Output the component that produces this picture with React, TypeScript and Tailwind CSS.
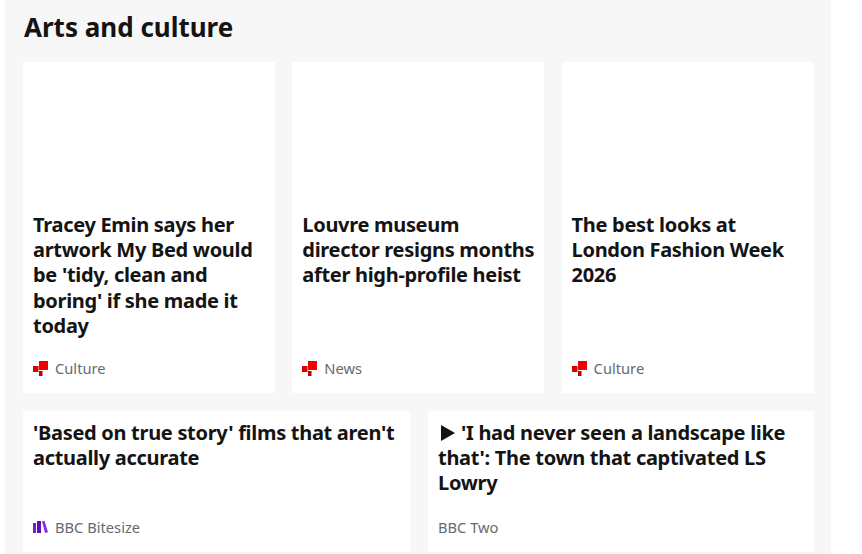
const font = "font-['Noto_Sans','Open_Sans',sans-serif]";

function CultureMark() {
  return (
    <svg width="15" height="15" viewBox="0 0 15 15" className="shrink-0">
      <rect x="0" y="5" width="5.5" height="6" fill="#d80000" />
      <rect x="6" y="0" width="9" height="9" fill="#f00000" />
      <rect x="6" y="10" width="3.5" height="5" fill="#c00000" />
    </svg>
  );
}

function BitesizeMark() {
  return (
    <svg width="15" height="14" viewBox="0 0 15 14" className="shrink-0">
      <rect x="0" y="3" width="3" height="10" fill="#7a1fc7" />
      <rect x="4" y="1" width="4" height="12" fill="#5a12b0" />
      <path d="M9 1.5 L11.5 0.8 L15 12.2 L12 13 Z" fill="#8a2fd6" />
    </svg>
  );
}

function PlayMark() {
  return (
    <svg width="14" height="16" viewBox="0 0 14 16" className="inline-block align-[-1px] ml-[3px] mr-[6px]">
      <path d="M0 0 L14 8 L0 16 Z" fill="#141414" />
    </svg>
  );
}

interface CardProps {
  title: string;
  label: string;
  mark?: React.ReactNode;
  play?: boolean;
  className?: string;
}

function Card({ title, label, mark, play, className }: CardProps) {
  return (
    <div className={"flex flex-col justify-between bg-white pl-[10px] pr-[6px] pb-[15px] " + (className || "")}>
      <h3 className="text-[20px] leading-[25.2px] font-bold text-[#141414] tracking-[-0.3px]">
        {play && <PlayMark />}
        {title}
      </h3>
      <div className="flex items-center gap-[7px] h-[20px] text-[14.7px] text-[#666a70]">
        {mark}
        <span>{label}</span>
      </div>
    </div>
  );
}

export default function App() {
  return (
    <div className={"w-[862px] h-[554px] bg-white overflow-hidden pl-[5px] " + font}>
      <div className="w-[826px] h-[554px] bg-[#f7f7f7] pl-[18px] pr-[17px]">
        <h2 className="h-[62px] pt-[9px] pl-[1px] text-[26px] leading-[36px] font-bold text-[#141414]">Arts and culture</h2>
        <div className="grid grid-cols-[252px_252px_252px] gap-x-[17.3px] h-[331px]">
          <Card
            className="pt-[150px]"
            title="Tracey Emin says her artwork My Bed would be 'tidy, clean and boring' if she made it today"
            label="Culture"
            mark={<CultureMark />}
          />
          <Card
            className="pt-[150px]"
            title="Louvre museum director resigns months after high-profile heist"
            label="News"
            mark={<CultureMark />}
          />
          <Card
            className="pt-[150px]"
            title="The best looks at London Fashion Week 2026"
            label="Culture"
            mark={<CultureMark />}
          />
        </div>
        <div className="grid grid-cols-[387px_386px] gap-x-[18px] h-[141px] mt-[18px]">
          <Card
            className="pt-[9px]"
            title="'Based on true story' films that aren't actually accurate"
            label="BBC Bitesize"
            mark={<BitesizeMark />}
          />
          <Card
            className="pt-[9px]"
            play
            title="'I had never seen a landscape like that': The town that captivated LS Lowry"
            label="BBC Two"
          />
        </div>
      </div>
    </div>
  );
}
